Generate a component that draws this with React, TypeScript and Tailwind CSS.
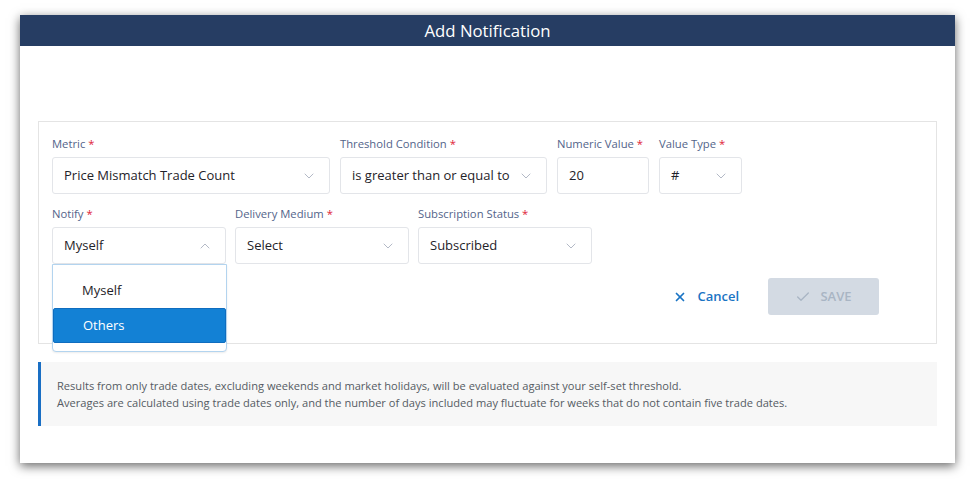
import { Check, ChevronDown, ChevronUp, X } from 'lucide-react'

interface FieldProps {
  label: string;
  value: string;
  width: string;
  open?: boolean;
  input?: boolean;
}

function Field({ label, value, width, open, input }: FieldProps) {
  return (
    <div className={`${width} relative shrink-0`}>
      <div className="h-[16px] leading-[16px] text-[11.25px] text-[#53648a] mb-[5px] whitespace-nowrap">
        {label} <span className="text-[#e0243a]">*</span>
      </div>
      <div className="h-[37px] border border-[#e3e5e9] rounded-[3px] bg-white flex items-center pl-[11px] pr-[12px]">
        <span className="flex-1 text-[13px] text-[#1f2329] whitespace-nowrap">{value}</span>
        {!input && (open
          ? <ChevronUp size={16} strokeWidth={1.25} className="text-[#a3abba]" />
          : <ChevronDown size={16} strokeWidth={1.25} className="text-[#a3abba]" />)}
      </div>

      {/* Open menu for the Notify select */}
      {open && (
        <div className="absolute left-0 top-[58px] w-[175px] z-10 bg-white border border-[#b3d4ef] rounded-b-[4px] py-[8px] shadow-[0_1px_2px_rgba(0,0,0,0.08)]">
          <div className="h-[35px] flex items-center pl-[29px] text-[13px] text-[#1f2329]">Myself</div>
          <div className="h-[35px] flex items-center pl-[29px] text-[13px] text-white bg-[#1381d5] border border-[#0f6dbf] rounded-[2px]">Others</div>
        </div>
      )}
    </div>
  )
}

export default function App() {
  return (
    <div className="w-[976px] h-[479px] bg-white pt-[15px] pl-[20px] font-['Open_Sans',sans-serif]">
      <div className="w-[935px] h-[448px] bg-white shadow-[0_3px_10px_rgba(0,0,0,0.6)] flex flex-col">
        {/* Header */}
        <div className="h-[31px] bg-[#263d63] flex items-center justify-center text-white text-[16.75px]">
          Add Notification
        </div>

        <div className="px-[18px] pt-[75px]">
          {/* Form panel */}
          <div className="border border-[#e4e4e4] pt-[14px] pl-[13px] pb-[28px]">
            <div className="flex gap-[10px]">
              <Field label="Metric" value="Price Mismatch Trade Count" width="w-[278px]" />
              <Field label="Threshold Condition" value="is greater than or equal to" width="w-[207px]" />
              <Field label="Numeric Value" value="20" width="w-[92px]" input />
              <Field label="Value Type" value="#" width="w-[83px]" />
            </div>
            <div className="flex gap-[9px] mt-[12px]">
              <Field label="Notify" value="Myself" width="w-[174px]" open />
              <Field label="Delivery Medium" value="Select" width="w-[174px]" />
              <Field label="Subscription Status" value="Subscribed" width="w-[174px]" />
            </div>

            {/* Actions */}
            <div className="flex justify-end items-center mt-[14px] pr-[57px]">
              <button className="flex items-center gap-[10px] text-[#1a74c4] text-[13px] font-semibold mr-[29px]">
                <X size={14} strokeWidth={3} />
                Cancel
              </button>
              <button className="w-[111px] h-[37px] rounded-[3px] bg-[#d3dae3] text-[#a9b5c4] text-[13px] font-semibold flex items-center justify-center gap-[9px]">
                <Check size={16} strokeWidth={2} />
                SAVE
              </button>
            </div>
          </div>

          {/* Info note */}
          <div className="mt-[18px] h-[64px] bg-[#f7f7f7] border-l-[3px] border-[#1a6fc4] pl-[16px] pt-[15px] text-[11.1px] leading-[17px] text-[#555b63]">
            <p>Results from only trade dates, excluding weekends and market holidays, will be evaluated against your self-set threshold.</p>
            <p>Averages are calculated using trade dates only, and the number of days included may fluctuate for weeks that do not contain five trade dates.</p>
          </div>
        </div>
      </div>
    </div>
  )
}
